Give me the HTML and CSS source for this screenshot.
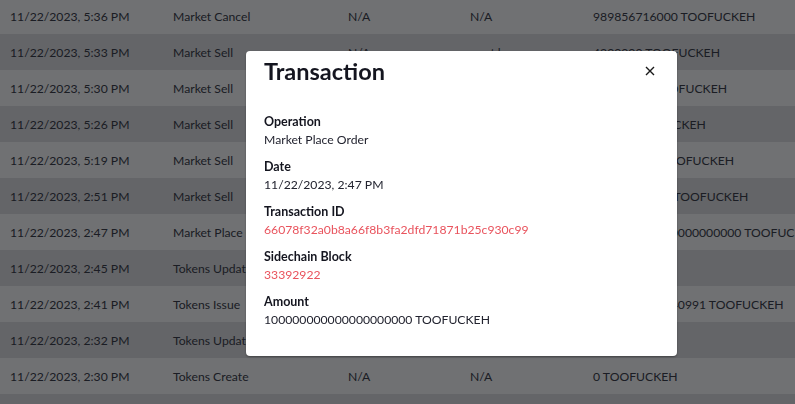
FILE: index.html
```html
<!DOCTYPE html>
<html lang="en">
<head>
<meta charset="utf-8">
<title>Transactions</title>
<link rel="stylesheet" href="styles.css">
</head>
<body>
<div class="rows">
  <div class="row light"><span>11/22/2023, 5:36 PM</span><span>Market Cancel</span><span>N/A</span><span>N/A</span><span>989856716000 TOOFUCKEH</span></div>
  <div class="row dark"><span>11/22/2023, 5:33 PM</span><span>Market Sell</span><span>N/A</span><span>nont.loorn</span><span>4200000 TOOFUCKEH</span></div>
  <div class="row light"><span>11/22/2023, 5:30 PM</span><span>Market Sell</span><span></span><span></span><span>50000000 TOOFUCKEH</span></div>
  <div class="row dark"><span>11/22/2023, 5:26 PM</span><span>Market Sell</span><span></span><span></span><span>50000 TOOFUCKEH</span></div>
  <div class="row light"><span>11/22/2023, 5:19 PM</span><span>Market Sell</span><span></span><span></span><span>500000000 TOOFUCKEH</span></div>
  <div class="row dark"><span>11/22/2023, 2:51 PM</span><span>Market Sell</span><span></span><span></span><span>50000000000 TOOFUCKEH</span></div>
  <div class="row light"><span>11/22/2023, 2:47 PM</span><span>Market Place Order</span><span></span><span></span><span>100000000000000000000 TOOFUCKEH</span></div>
  <div class="row dark"><span>11/22/2023, 2:45 PM</span><span>Tokens Update</span><span></span><span></span><span></span></div>
  <div class="row light"><span>11/22/2023, 2:41 PM</span><span>Tokens Issue</span><span></span><span></span><span>9999999999940991 TOOFUCKEH</span></div>
  <div class="row dark"><span>11/22/2023, 2:32 PM</span><span>Tokens Update</span><span></span><span></span><span></span></div>
  <div class="row light"><span>11/22/2023, 2:30 PM</span><span>Tokens Create</span><span>N/A</span><span>N/A</span><span>0 TOOFUCKEH</span></div>
  <div class="row dark"><span></span><span></span><span></span><span></span><span></span></div>
</div>

<div class="backdrop"></div>

<div class="modal" role="dialog">
  <div class="modal-header">
    <h2 class="modal-title">Transaction</h2>
    <button class="close" aria-label="Close">
      <svg width="10" height="10" viewBox="0 0 10 10"><path d="M1 1 L9 9 M9 1 L1 9" stroke="#1a1a1a" stroke-width="1.4" fill="none"/></svg>
    </button>
  </div>
  <div class="modal-body">
    <div class="field"><div class="label">Operation</div><div class="value">Market Place Order</div></div>
    <div class="field"><div class="label">Date</div><div class="value">11/22/2023, 2:47 PM</div></div>
    <div class="field"><div class="label">Transaction ID</div><div class="value link">66078f32a0b8a66f8b3fa2dfd71871b25c930c99</div></div>
    <div class="field"><div class="label">Sidechain Block</div><div class="value link">33392922</div></div>
    <div class="field"><div class="label">Amount</div><div class="value">100000000000000000000 TOOFUCKEH</div></div>
  </div>
</div>
</body>
</html>
```

FILE: styles.css
```css
html, body {
  margin: 0;
  padding: 0;
  height: 100%;
  overflow: hidden;
}

body {
  font-family: Lato, "Open Sans", sans-serif;
  font-size: 12.2px;
  color: #363a48;
  background: #c9cbd0;
}

.rows {
  margin-top: -2px;
}

.row {
  display: grid;
  grid-template-columns: 163px 175px 122px 123px 1fr;
  align-items: center;
  height: 36px;
  padding-left: 10px;
  white-space: nowrap;
  overflow: hidden;
}

.row.light {
  background: #e0e2e6;
}

.row.dark {
  background: #c9cbd0;
}

.backdrop {
  position: fixed;
  inset: 0;
  background: rgba(0, 0, 0, 0.5);
}

.modal {
  position: fixed;
  left: 246px;
  top: 51px;
  width: 431px;
  background: #fff;
  border-radius: 4px;
  box-shadow: 0 1px 2px rgba(0, 0, 0, 0.35);
  color: #1d1f2c;
}

.modal-header {
  display: flex;
  align-items: center;
  justify-content: space-between;
  padding: 6px 19px 0 18px;
}

.modal-title {
  margin: 0;
  font-size: 23.5px;
  line-height: 28.8px;
  font-weight: 700;
  color: #14151f;
}

.close {
  width: 16px;
  height: 16px;
  padding: 0;
  border: 0;
  background: transparent;
  display: flex;
  align-items: center;
  justify-content: center;
}

.modal-body {
  display: flex;
  flex-direction: column;
  gap: 9px;
  padding: 27px 18px 27px;
}

.label {
  font-weight: 700;
  font-size: 12.5px;
  line-height: 18px;
  color: #14151f;
}

.value {
  line-height: 18px;
  color: #22232f;
}

.value.link {
  color: #e9535d;
}
```
